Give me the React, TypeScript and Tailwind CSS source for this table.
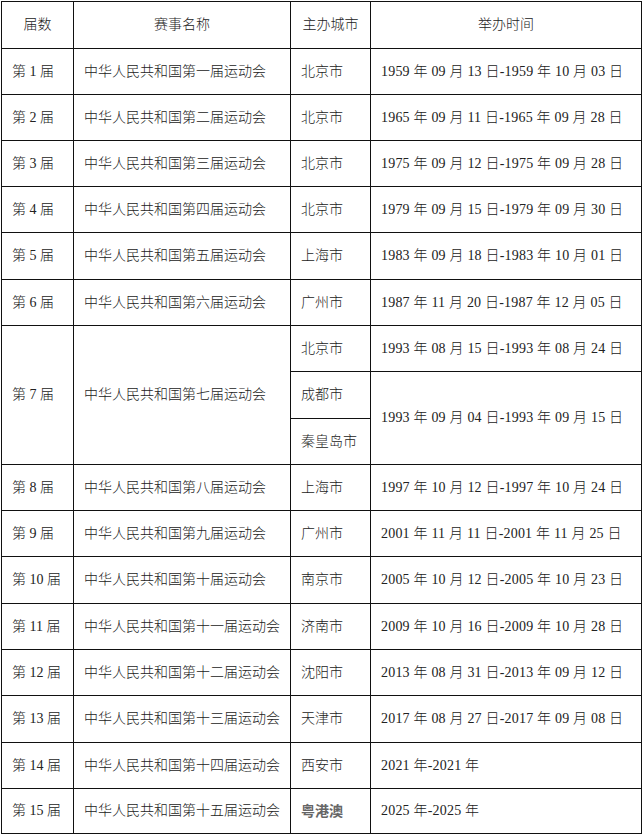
const rows = [
  { no: '1', name: '一', city: '北京市', date: '1959 年 09 月 13 日-1959 年 10 月 03 日' },
  { no: '2', name: '二', city: '北京市', date: '1965 年 09 月 11 日-1965 年 09 月 28 日' },
  { no: '3', name: '三', city: '北京市', date: '1975 年 09 月 12 日-1975 年 09 月 28 日' },
  { no: '4', name: '四', city: '北京市', date: '1979 年 09 月 15 日-1979 年 09 月 30 日' },
  { no: '5', name: '五', city: '上海市', date: '1983 年 09 月 18 日-1983 年 10 月 01 日', tall: true },
  { no: '6', name: '六', city: '广州市', date: '1987 年 11 月 20 日-1987 年 12 月 05 日' },
];

const later = [
  { no: '8', name: '八', city: '上海市', date: '1997 年 10 月 12 日-1997 年 10 月 24 日' },
  { no: '9', name: '九', city: '广州市', date: '2001 年 11 月 11 日-2001 年 11 月 25 日' },
  { no: '10', name: '十', city: '南京市', date: '2005 年 10 月 12 日-2005 年 10 月 23 日', tall: true },
  { no: '11', name: '十一', city: '济南市', date: '2009 年 10 月 16 日-2009 年 10 月 28 日' },
  { no: '12', name: '十二', city: '沈阳市', date: '2013 年 08 月 31 日-2013 年 09 月 12 日' },
  { no: '13', name: '十三', city: '天津市', date: '2017 年 08 月 27 日-2017 年 09 月 08 日', tall: true },
  { no: '14', name: '十四', city: '西安市', date: '2021 年-2021 年' },
];

const cell = 'border border-[#111] px-[10px] align-middle whitespace-nowrap';
const dateCell = `${cell} tracking-[0.2px]`;

function Row({ no, name, city, date, tall }: { no: string; name: string; city: string; date: string; tall?: boolean }) {
  return (
    <tr className={tall ? 'h-[47px]' : 'h-[46px]'}>
      <td className={cell}>第 {no} 届</td>
      <td className={cell}>中华人民共和国第{name}届运动会</td>
      <td className={cell}>{city}</td>
      <td className={dateCell}>{date}</td>
    </tr>
  );
}

export default function App() {
  return (
    <div className="bg-white w-[642px] h-[837px] pt-[1px] pl-[1px]">
      <table
        className="border-collapse table-fixed w-[641px] text-[14px] leading-none text-[#222] font-light"
        style={{ fontFamily: '"Liberation Serif", "Noto Sans CJK SC", serif' }}
      >
        <colgroup>
          <col className="w-[72px]" />
          <col className="w-[217px]" />
          <col className="w-[80px]" />
          <col />
        </colgroup>
        <thead>
          <tr className="h-[47px]">
            <th className={`${cell} font-light text-center`}>届数</th>
            <th className={`${cell} font-light text-center`}>赛事名称</th>
            <th className={`${cell} font-light text-center`}>主办城市</th>
            <th className={`${cell} font-light text-center`}>举办时间</th>
          </tr>
        </thead>
        <tbody>
          {rows.map((r) => (
            <Row key={r.no} {...r} />
          ))}
          <tr className="h-[46px]">
            <td className={cell} rowSpan={3}>第 7 届</td>
            <td className={cell} rowSpan={3}>中华人民共和国第七届运动会</td>
            <td className={cell}>北京市</td>
            <td className={dateCell}>1993 年 08 月 15 日-1993 年 08 月 24 日</td>
          </tr>
          <tr className="h-[47px]">
            <td className={cell}>成都市</td>
            <td className={dateCell} rowSpan={2}>1993 年 09 月 04 日-1993 年 09 月 15 日</td>
          </tr>
          <tr className="h-[46px]">
            <td className={cell}>秦皇岛市</td>
          </tr>
          {later.map((r) => (
            <Row key={r.no} {...r} />
          ))}
          <tr className="h-[45px]">
            <td className={cell}>第 15 届</td>
            <td className={cell}>中华人民共和国第十五届运动会</td>
            <td className={cell}>
              <span className="font-semibold text-[#666]" style={{ fontFamily: '"Noto Sans CJK SC", sans-serif' }}>粤港澳</span>
            </td>
            <td className={dateCell}>2025 年-2025 年</td>
          </tr>
        </tbody>
      </table>
    </div>
  );
}
